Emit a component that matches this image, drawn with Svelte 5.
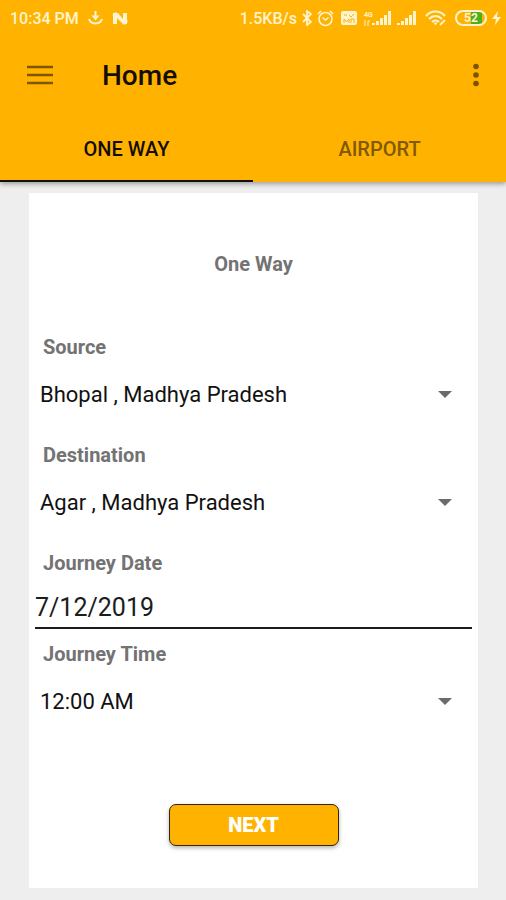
<script>
  let activeTab = $state('one-way');
  let source = $state('Bhopal , Madhya Pradesh');
  let destination = $state('Agar , Madhya Pradesh');
  let journeyDate = $state('7/12/2019');
  let journeyTime = $state('12:00 AM');

  const tabs = [
    { id: 'one-way', label: 'ONE WAY' },
    { id: 'airport', label: 'AIRPORT' },
  ];
  const cities = ['Bhopal , Madhya Pradesh', 'Agar , Madhya Pradesh'];
  const times = ['12:00 AM', '12:30 AM', '1:00 AM'];
</script>

{#snippet caret()}
  <svg class="caret" width="14" height="7" viewBox="0 0 14 7" aria-hidden="true">
    <path d="M0 0h14L7 7z" fill="#6b6b6b" />
  </svg>
{/snippet}

{#snippet signal()}
  <svg width="20" height="16" viewBox="0 0 20 16" fill="currentColor" aria-hidden="true">
    <path d="M0 13h3v2H0zM4 11h3v4H4zM8 8h3v7H8zM12 5h3v10h-3zM16 1h3v14h-3z" />
  </svg>
{/snippet}

<div class="app">
  <header class="app-bar">
    <div class="status-bar">
      <div class="status-left">
        <span class="clock">10:34 PM</span>
        <svg width="15" height="14" viewBox="0 0 15 14" fill="none" stroke="currentColor" stroke-width="2" aria-hidden="true">
          <path d="M7.500 0v7M1 8c2 6 11 6 13 0" />
          <path d="M3.500 4.500h8l-4 5z" fill="currentColor" stroke="none" />
        </svg>
        <svg width="16" height="13" viewBox="0 0 16 13" fill="currentColor" aria-hidden="true">
          <path d="M1 1h5l5 6V1h4v11h-4L5 6v6H1z" />
          <path d="M0 3l3-3 3 1v5zM10 12l5-5 1 3-3 3z" opacity=".6" />
        </svg>
      </div>
      <div class="status-right">
        <span class="speed">1.5KB/s</span>
        <svg width="10" height="16" viewBox="0 0 10 16" fill="none" stroke="currentColor" stroke-width="1.800" aria-hidden="true">
          <path d="M1 4l8 8-4 3V1l4 3-8 8" />
        </svg>
        <svg class="alarm" width="17" height="17" viewBox="0 0 17 17" fill="none" stroke="currentColor" stroke-width="1.600" aria-hidden="true">
          <circle cx="8.500" cy="9" r="6.500" />
          <path d="M5.500 7.500l3 2.500 3-2.500M1 4l3-3M16 4l-3-3" />
        </svg>
        <svg class="volte" width="16" height="14" viewBox="0 0 16 14" aria-hidden="true">
          <rect width="16" height="14" rx="2" fill="currentColor" />
          <path d="M3 4h3M8 4l2 2 3-3M3 12V8l2.500 3L8 8v4M10 12V8h3v4" fill="none" stroke="#ffb300" />
        </svg>
        <span class="network">
          <span class="network-type">4G</span>
          <svg class="arrows" width="6" height="6" viewBox="0 0 6 6" fill="none" stroke="currentColor" aria-hidden="true">
            <path d="M1 0v6M4 6V1h2" />
          </svg>
          {@render signal()}
        </span>
        {@render signal()}
        <svg class="wifi" width="22" height="16" viewBox="0 0 22 16" fill="none" stroke="currentColor" stroke-width="2.200" aria-hidden="true">
          <path d="M1 6c5-6 14-6 19 0M4 9c4-4 9-4 13 0M7 12c2-2 5-2 7 0" />
          <path d="M8.500 12.500h4l-2 3z" fill="currentColor" stroke="none" />
          <path d="M15 15l5-5" stroke-width="1.800" />
        </svg>
        <span class="battery"><span>5</span><span>2</span></span>
        <svg width="9" height="14" viewBox="0 0 9 14" fill="currentColor" aria-hidden="true">
          <path d="M6 0L0 8h4l-1 6 6-8H5z" />
        </svg>
      </div>
    </div>

    <div class="toolbar">
      <button class="icon-button" type="button" aria-label="Open menu">
        <svg width="26" height="20" viewBox="0 0 26 20" fill="none" stroke="#7d5700" stroke-width="2.400" aria-hidden="true">
          <path d="M0 2h26M0 10h26M0 18h26" />
        </svg>
      </button>
      <h1>Home</h1>
      <button class="icon-button more" type="button" aria-label="More options">
        <svg width="6" height="24" viewBox="0 0 6 24" fill="#7d5300" aria-hidden="true">
          <circle cx="3" cy="3.500" r="2.800" />
          <circle cx="3" cy="12" r="2.800" />
          <circle cx="3" cy="20.500" r="2.800" />
        </svg>
      </button>
    </div>

    <div class="tabs" role="tablist">
      {#each tabs as tab (tab.id)}
        <button
          class="tab"
          class:active={activeTab === tab.id}
          type="button"
          role="tab"
          aria-selected={activeTab === tab.id}
          onclick={() => (activeTab = tab.id)}
        >
          {tab.label}
        </button>
      {/each}
    </div>
  </header>

  <main>
    <form class="card" onsubmit={(e) => e.preventDefault()}>
      <h2>One Way</h2>

      <div class="field">
        <label for="source">Source</label>
        <div class="spinner">
          <select id="source" bind:value={source}>
            {#each cities as city}
              <option>{city}</option>
            {/each}
          </select>
          {@render caret()}
        </div>
      </div>

      <div class="field">
        <label for="destination">Destination</label>
        <div class="spinner">
          <select id="destination" bind:value={destination}>
            {#each cities as city}
              <option>{city}</option>
            {/each}
          </select>
          {@render caret()}
        </div>
      </div>

      <div class="field date">
        <label for="date">Journey Date</label>
        <input id="date" type="text" bind:value={journeyDate} />
      </div>

      <div class="field">
        <label for="time">Journey Time</label>
        <div class="spinner">
          <select id="time" bind:value={journeyTime}>
            {#each times as time}
              <option>{time}</option>
            {/each}
          </select>
          {@render caret()}
        </div>
      </div>

      <button class="next" type="submit">NEXT</button>
    </form>
  </main>
</div>

<style>
  :global(body) {
    background: #eeeeee;
  }
  .app,
  button,
  input,
  select {
    font-family: Roboto, "Liberation Sans", sans-serif;
  }
  button {
    border: none;
    background: none;
    padding: 0;
    cursor: pointer;
  }
  svg {
    display: block;
    flex-shrink: 0;
  }

  /* App bar */
  .app-bar {
    position: relative;
    background: #ffb300;
    box-shadow: 0 2px 5px rgba(0, 0, 0, 0.35);
  }
  .status-bar {
    display: flex;
    justify-content: space-between;
    align-items: center;
    height: 36px;
    padding: 0 5px 0 10px;
    color: #fff4cf;
  }
  .status-left,
  .status-right {
    display: flex;
    align-items: center;
  }
  .status-left {
    gap: 9px;
  }
  .status-right {
    gap: 5px;
  }
  .clock,
  .speed {
    font-size: 16px;
    font-weight: 500;
  }
  .alarm,
  .volte {
    margin-right: 2px;
  }
  .network {
    display: grid;
    grid-template-columns: 8px 20px;
    align-items: end;
  }
  .network svg:last-child {
    grid-column: 2;
    grid-row: 1 / 3;
  }
  .network-type {
    font-size: 7px;
    line-height: 8px;
    font-weight: 700;
  }
  .wifi {
    margin: 0 3px;
  }
  .battery {
    display: flex;
    justify-content: center;
    width: 28px;
    border: 2px solid currentColor;
    border-radius: 8px;
    font-size: 12px;
    line-height: 12px;
    font-weight: 700;
    background: linear-gradient(90deg, transparent 50%, #4caf22 50%, #4caf22 90%, transparent 90%);
  }
  .toolbar {
    display: flex;
    align-items: center;
    height: 78px;
    padding: 0 24px;
  }
  .icon-button {
    display: flex;
    align-items: center;
    justify-content: center;
    width: 32px;
    height: 48px;
  }
  h1 {
    flex: 1;
    margin: 0 0 0 46px;
    padding-top: 2px;
    font-size: 28px;
    line-height: 32px;
    font-weight: 500;
    color: #150e00;
  }
  .more {
    width: 12px;
  }
  .tabs {
    display: grid;
    grid-template-columns: 1fr 1fr;
  }
  .tab {
    height: 68px;
    padding-top: 4px;
    border-bottom: 2px solid transparent;
    font-size: 20px;
    font-weight: 500;
    color: #805900;
  }
  .tab.active {
    border-bottom-color: #150e00;
    color: #150e00;
  }

  /* Booking form */
  main {
    padding: 11px 28px 12px 29px;
  }
  .card {
    display: flex;
    flex-direction: column;
    gap: 25px;
    padding: 59px 6px 42px;
    background: #ffffff;
  }
  h2 {
    margin: 0 0 34px;
    font-size: 20px;
    line-height: 24px;
    font-weight: 700;
    text-align: center;
    color: #737373;
  }
  .field {
    display: flex;
    flex-direction: column;
    gap: 11px;
  }
  label {
    padding-left: 8px;
    font-size: 20px;
    line-height: 24px;
    font-weight: 700;
    color: #737373;
  }
  .spinner {
    display: grid;
    align-items: center;
  }
  .spinner > :global(*) {
    grid-area: 1 / 1;
  }
  select {
    appearance: none;
    width: 100%;
    height: 48px;
    padding: 0 40px 0 5px;
    border: none;
    background: transparent;
    font-size: 22px;
    color: #111111;
  }
  .caret {
    justify-self: end;
    margin-right: 20px;
    pointer-events: none;
  }
  .date {
    margin-bottom: -12px;
  }
  input {
    box-sizing: border-box;
    width: 100%;
    height: 43px;
    padding: 2px 0 0;
    border: none;
    border-bottom: 2px solid #1c1c1c;
    background: transparent;
    font-size: 25px;
    color: #1c1c1c;
  }
  .next {
    align-self: center;
    width: 170px;
    height: 42px;
    margin-top: 54px;
    border: 1px solid #33240a;
    border-radius: 7px;
    background: #ffb300;
    box-shadow: 0 2px 4px rgba(0, 0, 0, 0.3);
    font-size: 20px;
    font-weight: 900;
    color: #ffffff;
  }
</style>
